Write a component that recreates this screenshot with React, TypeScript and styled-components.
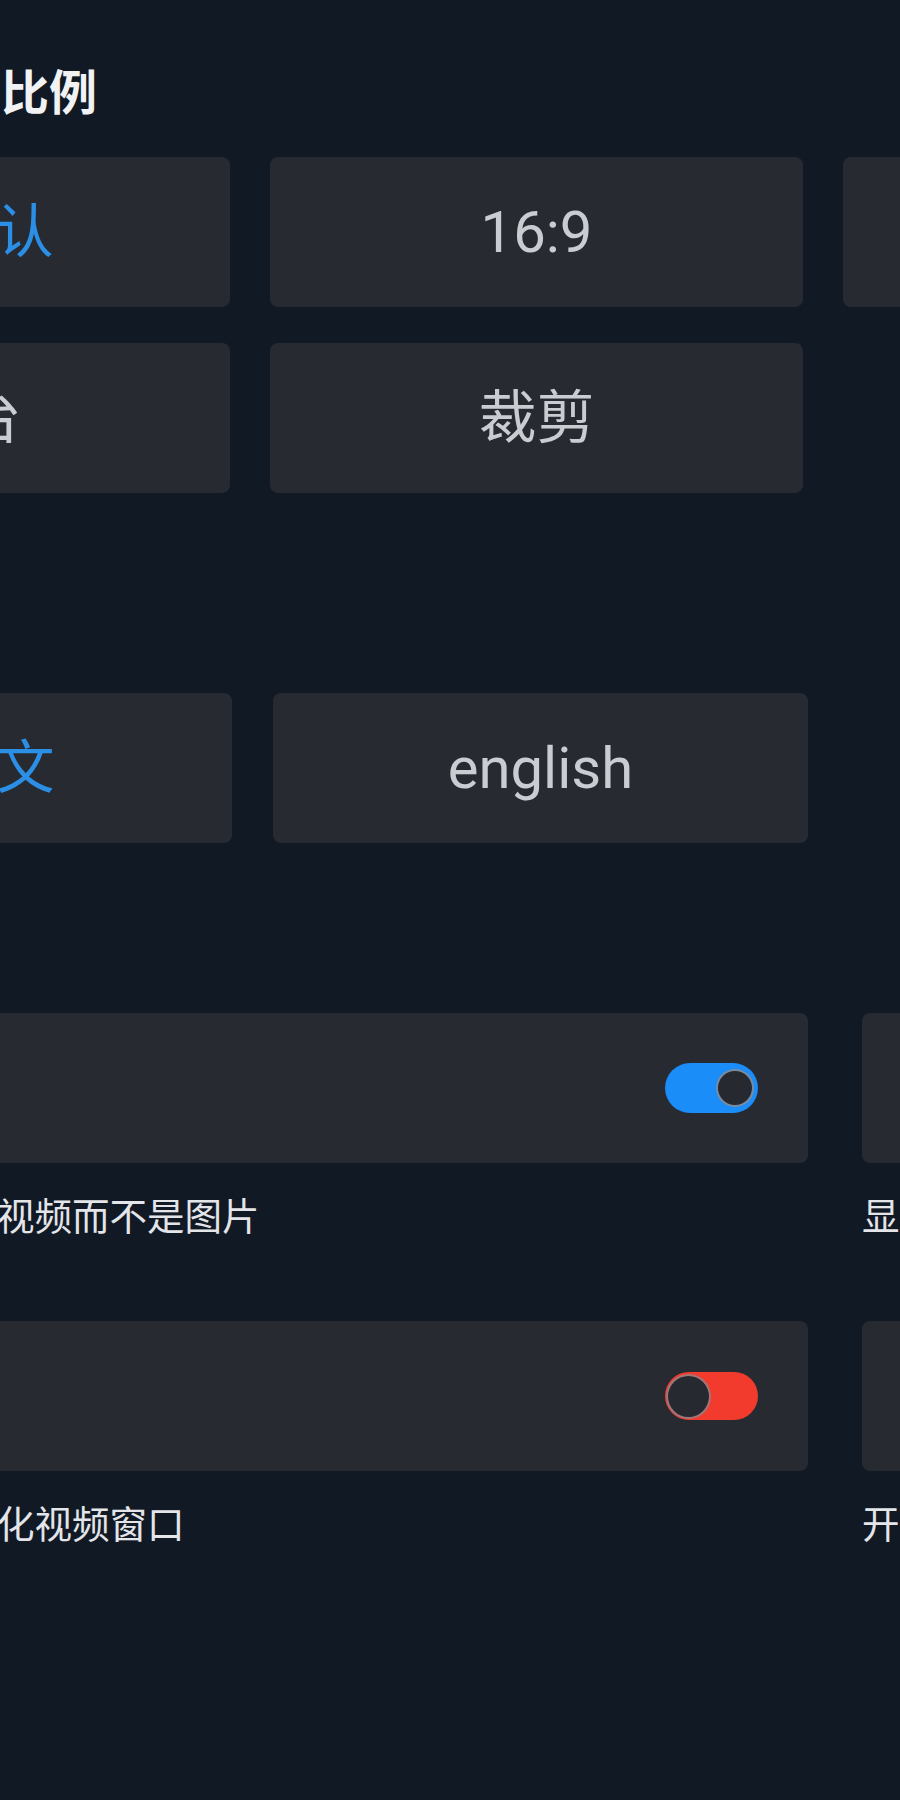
import React, { useState } from "react";
import styled, { createGlobalStyle } from "styled-components";
import { Check } from "lucide-react";

const GlobalStyle = createGlobalStyle`
  html, body {
    margin: 0;
    padding: 0;
    overflow: hidden;
    background: #111925;
  }
  body {
    font-family: Roboto, "Noto Sans CJK SC", sans-serif;
    color: #c9ccd1;
  }
`;

// the settings screen is scrolled sideways, so the page starts left of the window
const Page = styled.div`
  min-height: 1800px;
  padding-top: 65px;
  margin-left: -303px;
  width: 2400px;
  box-sizing: border-box;
`;

const Section = styled.section<{ $top?: number }>`
  margin-top: ${(p) => p.$top || 0}px;
`;

const Title = styled.h2`
  margin: 0 0 34px 16px;
  font-size: 48px;
  line-height: 58px;
  font-weight: 700;
  color: #f1f2f4;
  white-space: nowrap;
`;

const OptionGrid = styled.div<{ $col: number; $gap: number }>`
  display: grid;
  grid-template-columns: repeat(3, ${(p) => p.$col}px);
  grid-auto-rows: 150px;
  column-gap: ${(p) => p.$gap}px;
  row-gap: 36px;
`;

const OptionCard = styled.button<{ $active?: boolean }>`
  display: flex;
  align-items: center;
  justify-content: center;
  gap: 10px;
  border: none;
  border-radius: 8px;
  background: #272a31;
  font-family: inherit;
  font-size: 58px;
  line-height: 1;
  color: ${(p) => (p.$active ? "#2b8fe6" : "#c9ccd1")};
  white-space: nowrap;
  padding: 0;
  cursor: pointer;
`;

const ToggleGrid = styled.div`
  display: grid;
  grid-template-columns: repeat(2, 1111px);
  column-gap: 54px;
  row-gap: 79px;
`;

const ToggleItem = styled.div`
  display: flex;
  flex-direction: column;
`;

const ToggleCard = styled.div`
  height: 150px;
  display: flex;
  align-items: center;
  justify-content: space-between;
  padding: 0 50px 0 40px;
  border-radius: 8px;
  background: #272a31;
`;

const ToggleLabel = styled.span`
  font-size: 46px;
  color: #dfe1e5;
  white-space: nowrap;
`;

const Track = styled.div<{ $on: boolean }>`
  width: 93px;
  height: ${(p) => (p.$on ? 50 : 48)}px;
  border-radius: 25px;
  box-sizing: border-box;
  padding: 0 ${(p) => (p.$on ? 4 : 1)}px;
  display: flex;
  align-items: center;
  justify-content: ${(p) => (p.$on ? "flex-end" : "flex-start")};
  background: ${(p) => (p.$on ? "#1b8df8" : "#f33b2d")};
  cursor: pointer;
`;

const Knob = styled.div<{ $on: boolean }>`
  width: ${(p) => (p.$on ? 38 : 45)}px;
  height: ${(p) => (p.$on ? 38 : 45)}px;
  box-sizing: border-box;
  border-radius: 50%;
  background: #262930;
  border: 2px solid
    ${(p) => (p.$on ? "rgba(190, 220, 255, 0.55)" : "rgba(240, 170, 170, 0.6)")};
`;

const Description = styled.p`
  margin: 30px 0 0;
  font-size: 37.5px;
  line-height: 49px;
  color: #e3e5e9;
  white-space: nowrap;
`;

const ratios = ["默认", "16:9", "4:3", "平台", "裁剪"];
const languages = ["中文", "english"];

const toggles = [
  { label: "视频背景", desc: "首页背景显示动态视频而不是图片", on: true },
  { label: "显示时间", desc: "显示当前时间", on: false },
  { label: "画中画", desc: "画中画模式下最小化视频窗口", on: false },
  { label: "开机启动", desc: "开机时自动启动应用", on: true },
];

const Toggle: React.FC<{ on: boolean; onClick: () => void }> = ({ on, onClick }) => (
  <Track $on={on} onClick={onClick}>
    <Knob $on={on} />
  </Track>
);

const App: React.FC = () => {
  const [ratio, setRatio] = useState("默认");
  const [lang, setLang] = useState("中文");
  const [flags, setFlags] = useState(toggles.map((t) => t.on));

  const flip = (i: number) => {
    setFlags(flags.map((f, j) => (j === i ? !f : f)));
  };

  return (
    <>
      <GlobalStyle />
      <Page>
        <Section>
          <Title>视频默认画面比例</Title>
          <OptionGrid $col={533} $gap={40}>
            {ratios.map((r) => (
              <OptionCard key={r} $active={r === ratio} onClick={() => setRatio(r)}>
                {r === ratio && <Check size={54} strokeWidth={2.5} />}
                {r}
              </OptionCard>
            ))}
          </OptionGrid>
        </Section>

        <Section $top={108}>
          <Title>界面语言</Title>
          <OptionGrid $col={535} $gap={41}>
            {languages.map((l) => (
              <OptionCard key={l} $active={l === lang} onClick={() => setLang(l)}>
                {l === lang && <Check size={54} strokeWidth={2.5} />}
                {l}
              </OptionCard>
            ))}
          </OptionGrid>
        </Section>

        <Section $top={78}>
          <Title>播放设置</Title>
          <ToggleGrid>
            {toggles.map((t, i) => (
              <ToggleItem key={t.label}>
                <ToggleCard>
                  <ToggleLabel>{t.label}</ToggleLabel>
                  <Toggle on={flags[i]} onClick={() => flip(i)} />
                </ToggleCard>
                <Description>{t.desc}</Description>
              </ToggleItem>
            ))}
          </ToggleGrid>
        </Section>
      </Page>
    </>
  );
};

export default App;
